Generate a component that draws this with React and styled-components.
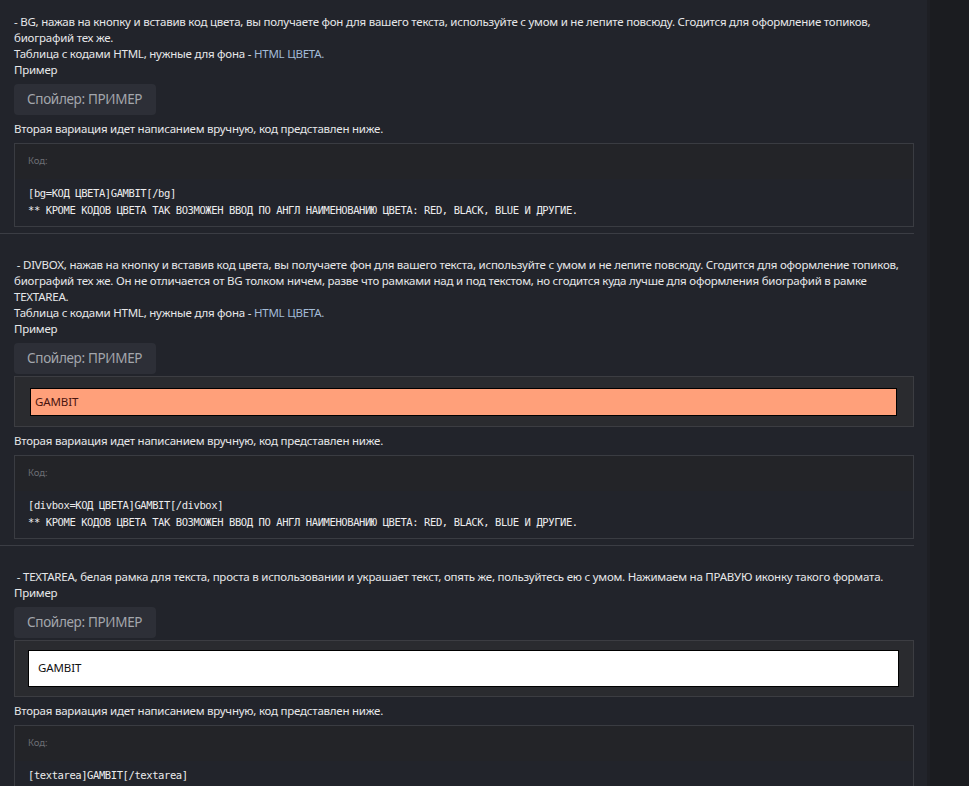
import React from "react";
import styled, { createGlobalStyle } from "styled-components";

const GlobalStyle = createGlobalStyle`
  html, body { margin: 0; padding: 0; }
  body {
    background: #22242b;
    font-family: "Noto Sans", "Open Sans", sans-serif;
    color: #e6e7e9;
  }
`;

const Page = styled.div`
  display: flex;
  min-height: 100vh;
`;

const Main = styled.main`
  width: 927px;
  flex: none;
  padding-right: 13px;
  box-sizing: border-box;
  background: #22242b;
`;

const SideStrip = styled.aside`
  flex: 1;
  background: #1b1c20;
  border-left: 3px solid #1e1f24;
`;

const Section = styled.section`
  padding: ${(p) => (p.$first ? "14px" : "23px")} 0 6px 14px;
  border-top: ${(p) => (p.$first ? "none" : "1px solid #3b3d44")};
`;

const Text = styled.div`
  font-size: 11.5px;
  letter-spacing: -0.23px;
  line-height: 16px;
  color: #e6e7e9;
  white-space: ${(p) => (p.$nowrap ? "nowrap" : "normal")};
`;

const Link = styled.span`
  color: #a3bbd6;
`;

const SpoilerButton = styled.button`
  display: block;
  margin-top: 6px;
  height: 31px;
  padding: 0 14px 0 13px;
  border: none;
  border-radius: 4px;
  background: #2d2f37;
  color: #a3a6ac;
  font-family: "Noto Sans", "Open Sans", sans-serif;
  font-size: 13.5px;
  letter-spacing: -0.33px;
  line-height: 31px;
  cursor: pointer;
`;

const SpoilerBody = styled.div`
  margin-top: 2px;
  padding: 9px 14px 9px 13px;
  background: #2a2b2f;
  border: 1px solid #3c3d42;
`;

const DivBox = styled.div`
  margin: 2px 2px 1px 2px;
  height: 28px;
  box-sizing: border-box;
  border: 1px solid #000;
  background: #ffa07a;
  color: #4a1610;
  padding-left: 4px;
  font-size: 11.5px;
  letter-spacing: -0.1px;
  line-height: 26px;
`;

const TextareaBox = styled.div`
  height: 37px;
  box-sizing: border-box;
  border: 1.5px solid #000;
  background: #fff;
  color: #111;
  padding-left: 9px;
  font-size: 11.5px;
  letter-spacing: -0.1px;
  line-height: 34px;
`;

const Note = styled(Text)`
  margin-top: 6px;
`;

const CodeBox = styled.div`
  margin-top: 6px;
  border: 1px solid #3a3c42;
`;

const CodeHeader = styled.div`
  height: 35px;
  padding-left: 13px;
  background: #232428;
  color: #6c6e74;
  font-size: 9.5px;
  line-height: 34px;
`;

const CodeBody = styled.pre`
  margin: 0;
  padding: 6px 13px 7px;
  font-family: "DejaVu Sans Mono", "Liberation Mono", monospace;
  font-size: 10.5px;
  letter-spacing: -0.41px;
  line-height: 17px;
  color: #ececed;
  white-space: pre;
`;

const NOTE = "Вторая вариация идет написанием вручную, код представлен ниже.";
const EXTRA =
  "** КРОМЕ КОДОВ ЦВЕТА ТАК ВОЗМОЖЕН ВВОД ПО АНГЛ НАИМЕНОВАНИЮ ЦВЕТА: RED, BLACK, BLUE И ДРУГИЕ.";

function Code({ lines }) {
  return (
    <CodeBox>
      <CodeHeader>Код:</CodeHeader>
      <CodeBody>{lines.join("\n")}</CodeBody>
    </CodeBox>
  );
}

function Spoiler({ children }) {
  return (
    <>
      <SpoilerButton type="button">Спойлер: ПРИМЕР</SpoilerButton>
      {children ? <SpoilerBody>{children}</SpoilerBody> : null}
    </>
  );
}

const TableLine = () => (
  <Text>
    Таблица с кодами HTML, нужные для фона - <Link>HTML ЦВЕТА.</Link>
  </Text>
);

export default function App() {
  return (
    <>
      <GlobalStyle />
      <Page>
        <Main>
          <Section $first>
            <Text $nowrap>
              - BG, нажав на кнопку и вставив код цвета, вы получаете фон для вашего текста, используйте с умом и не
              лепите повсюду. Сгодится для оформление топиков,
            </Text>
            <Text>биографий тех же.</Text>
            <TableLine />
            <Text>Пример</Text>
            <Spoiler />
            <Note>{NOTE}</Note>
            <Code lines={["[bg=КОД ЦВЕТА]GAMBIT[/bg]", EXTRA]} />
          </Section>

          <Section>
            <Text $nowrap>
              {"\u00a0"}- DIVBOX, нажав на кнопку и вставив код цвета, вы получаете фон для вашего текста, используйте с
              умом и не лепите повсюду. Сгодится для оформление топиков,
            </Text>
            <Text $nowrap>
              биографий тех же. Он не отличается от BG толком ничем, разве что рамками над и под текстом, но сгодится
              куда лучше для оформления биографий в рамке
            </Text>
            <Text>TEXTAREA.</Text>
            <TableLine />
            <Text>Пример</Text>
            <Spoiler>
              <DivBox>GAMBIT</DivBox>
            </Spoiler>
            <Note>{NOTE}</Note>
            <Code lines={["[divbox=КОД ЦВЕТА]GAMBIT[/divbox]", EXTRA]} />
          </Section>

          <Section>
            <Text $nowrap>
              {"\u00a0"}- TEXTAREA, белая рамка для текста, проста в использовании и украшает текст, опять же,
              пользуйтесь ею с умом. Нажимаем на ПРАВУЮ иконку такого формата.
            </Text>
            <Text>Пример</Text>
            <Spoiler>
              <TextareaBox>GAMBIT</TextareaBox>
            </Spoiler>
            <Note>{NOTE}</Note>
            <Code lines={["[textarea]GAMBIT[/textarea]"]} />
          </Section>
        </Main>
        <SideStrip />
      </Page>
    </>
  );
}
